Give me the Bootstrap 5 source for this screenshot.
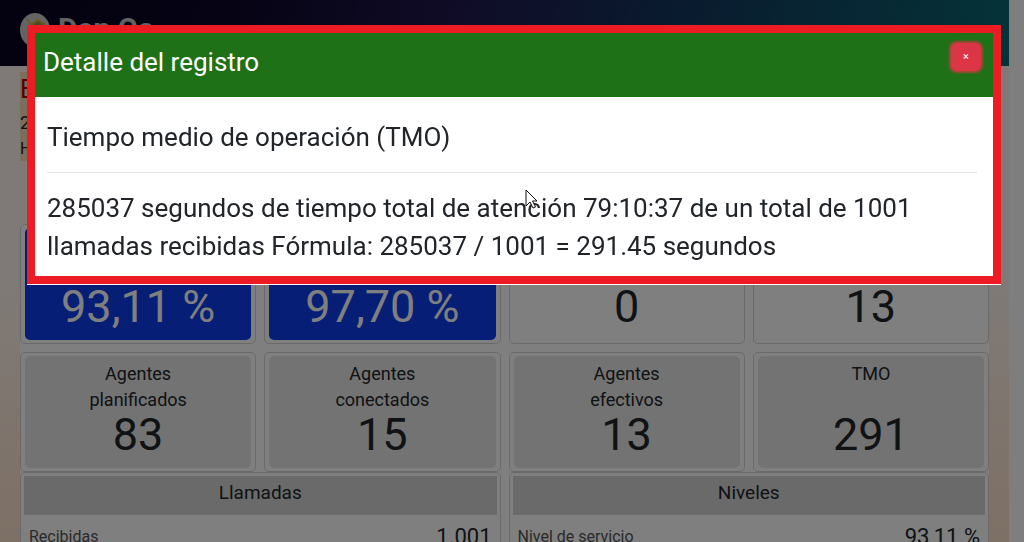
<!DOCTYPE html>
<html lang="es">
<head>
<meta charset="utf-8">
<meta name="viewport" content="width=device-width, initial-scale=1">
<title>Detalle del registro</title>
<link href="https://cdn.jsdelivr.net/npm/bootstrap@5.3.0/dist/css/bootstrap.min.css" rel="stylesheet">
<style>
body { font-family: Roboto, "Liberation Sans", sans-serif; background: #fdfdfd; overflow: hidden; height: 100vh; }
.page-area { margin-right: 15px; min-height: 100vh; background: linear-gradient(#fff5ee 0, #fff5ee 50%, #fbdfc8 100%); }
.topbar { height: 66px; padding: 0 20px; background: linear-gradient(100deg, #080420, #0c0628 22%, #20184e 45%, #14345c 65%, #0a6672); }
.brand-mark { width: 32px; height: 36px; margin-top: 12px; }
.brand-name { font-size: 30px; line-height: 36px; font-weight: 700; color: #c4c4c4; margin: 11px 0 0 6px; }
.intro { padding: 6px 20px 0; height: 158px; }
.intro-box { width: 240px; height: 89px; background: #f2deb8; }
.intro-title { font-size: 25px; line-height: 36px; color: #b00000; }
.intro-date { font-size: 18px; line-height: 30px; }
.intro-hour { font-size: 16px; line-height: 22px; }
.board { padding: 0 20px; }
.board-inner { background: #fff; }
.grid-4, .grid-2 { display: grid; gap: 8px; }
.grid-4 { grid-template-columns: repeat(4, 1fr); }
.grid-2 { grid-template-columns: repeat(2, 1fr); }
.kpi { border: 1px solid #d4d4d4; border-radius: 5px; padding: 3px 4px; min-height: 120px; display: flex; }
.kpi-face { flex: 1; border-radius: 5px; text-align: center; padding-top: 5px; }
.kpi-gray { background: #e6e6e6; }
.kpi-blue { background: #0c3cea; color: #fff; }
.kpi-label { font-size: 18px; line-height: 26px; min-height: 52px; padding: 0 60px; }
.kpi-num { font-size: 45px; line-height: 44px; }
.panel { border: 1px solid #d4d4d4; border-radius: 5px; padding: 3px 3px 0; }
.panel-title { background: #d4d4d4; font-size: 19px; line-height: 34px; padding-bottom: 5px; text-align: center; margin: 0; font-weight: 400; }
.panel-table td { padding: 6px 5px; line-height: 32px; font-size: 16px; color: #555; }
.panel-table .val { font-size: 22px; color: #212529; text-align: right; }
.modal-dialog.detail { max-width: none; margin: 25px 23px 0 27px; }
.detail .modal-content { border: 8px solid #ed1c24; border-radius: 0; box-shadow: 0 1px 0 #fff; }
.detail .modal-header { background: #1f7117; color: #fff; border: 0; border-radius: 0; padding: 10px 12px 16px 8px; align-items: flex-start; }
.detail .modal-title { font-size: 26px; line-height: 38px; font-weight: 400; }
.btn-x { width: 30px; height: 28px; font-size: 11px; line-height: 12px; padding: 0; box-shadow: 0 0 2px 2px rgba(220,53,69,.7); }
.detail .modal-body { padding: 21px 16px 11px 12px; font-size: 26px; line-height: 38px; }
.detail hr { margin: 16px 0; border-color: #000; opacity: .12; }
.pointer { position: absolute; left: 490px; top: 92px; width: 13px; height: 21px; }
</style>
</head>
<body class="modal-open">
<div class="page-area">
  <nav class="topbar d-flex">
    <a class="d-flex align-items-start text-decoration-none" href="#">
      <svg class="brand-mark" viewBox="0 0 32 36" aria-hidden="true"><ellipse cx="15" cy="18" rx="15" ry="17" fill="#c8c8c8"/><path d="M7 7l5 7M12 12l6-4 6 4-5 5z" stroke="#d8b040" stroke-width="2" fill="#8a9a50"/></svg>
      <span class="brand-name">Dan Co</span>
    </a>
  </nav>
  <header class="intro"><div class="intro-box">
    <div class="intro-title">E</div><div class="intro-date">2</div><div class="intro-hour">H</div>
  </div></header>
  <main class="board"><div class="board-inner">
    <div class="grid-4">
      <section class="kpi"><div class="kpi-face kpi-blue"><div class="kpi-label"></div><div class="kpi-num">93,11 %</div></div></section>
      <section class="kpi"><div class="kpi-face kpi-blue"><div class="kpi-label"></div><div class="kpi-num">97,70 %</div></div></section>
      <section class="kpi"><div class="kpi-face"><div class="kpi-label"></div><div class="kpi-num">0</div></div></section>
      <section class="kpi"><div class="kpi-face"><div class="kpi-label"></div><div class="kpi-num">13</div></div></section>
      <section class="kpi"><div class="kpi-face kpi-gray"><div class="kpi-label">Agentes planificados</div><div class="kpi-num">83</div></div></section>
      <section class="kpi"><div class="kpi-face kpi-gray"><div class="kpi-label">Agentes conectados</div><div class="kpi-num">15</div></div></section>
      <section class="kpi"><div class="kpi-face kpi-gray"><div class="kpi-label">Agentes efectivos</div><div class="kpi-num">13</div></div></section>
      <section class="kpi"><div class="kpi-face kpi-gray"><div class="kpi-label">TMO</div><div class="kpi-num">291</div></div></section>
    </div>
    <div class="grid-2">
      <section class="panel"><h2 class="panel-title">Llamadas</h2>
        <table class="panel-table w-100"><tbody><tr><td>Recibidas</td><td class="val">1.001</td></tr></tbody></table></section>
      <section class="panel"><h2 class="panel-title">Niveles</h2>
        <table class="panel-table w-100"><tbody><tr><td>Nivel de servicio</td><td class="val">93,11 %</td></tr></tbody></table></section>
    </div>
  </div></main>
</div>
<div class="modal-backdrop show"></div>
<div class="modal d-block" tabindex="-1" role="dialog" aria-labelledby="detailTitle">
  <div class="modal-dialog detail"><div class="modal-content">
    <div class="modal-header justify-content-between">
      <h1 class="modal-title" id="detailTitle">Detalle del registro</h1>
      <button type="button" class="btn btn-danger btn-x" aria-label="Cerrar">×</button>
    </div>
    <div class="modal-body">
      <div>Tiempo medio de operación (TMO)</div>
      <hr>
      <p class="mb-0">285037 segundos de tiempo total de atención 79:10:37 de un total de 1001 llamadas recibidas Fórmula: 285037 / 1001 = 291.45 segundos</p>
      <svg class="pointer" viewBox="0 0 13 21" aria-hidden="true"><path d="M1 1v16l4-4 3 6 2.500-1-3-6H12z" fill="#fff" stroke="#111" stroke-width="1"/></svg>
    </div>
  </div></div>
</div>
<script src="https://cdn.jsdelivr.net/npm/bootstrap@5.3.0/dist/js/bootstrap.bundle.min.js"></script>
</body>
</html>
